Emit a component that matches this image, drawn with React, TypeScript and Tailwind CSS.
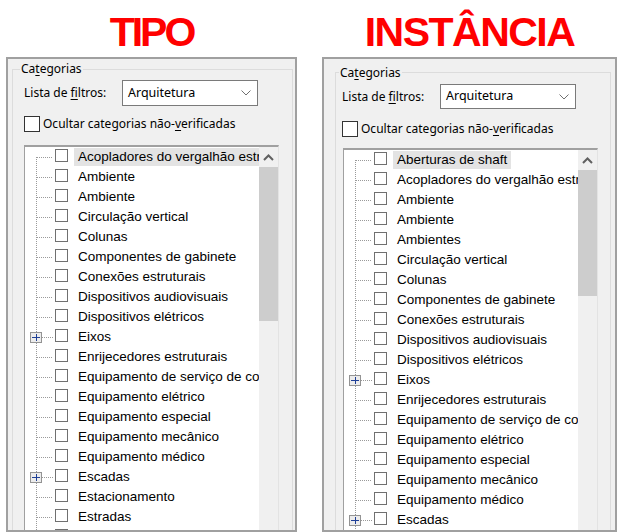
import React from 'react';

type Row = { t: string; sel?: boolean; plus?: boolean };

const UI = "font-['Noto_Sans','Liberation_Sans',sans-serif] text-[12px] text-black";

const leftRows: Row[] = [
  { t: 'Acopladores do vergalhão estrutural', sel: true },
  { t: 'Ambiente' },
  { t: 'Ambiente' },
  { t: 'Circulação vertical' },
  { t: 'Colunas' },
  { t: 'Componentes de gabinete' },
  { t: 'Conexões estruturais' },
  { t: 'Dispositivos audiovisuais' },
  { t: 'Dispositivos elétricos' },
  { t: 'Eixos', plus: true },
  { t: 'Enrijecedores estruturais' },
  { t: 'Equipamento de serviço de construção' },
  { t: 'Equipamento elétrico' },
  { t: 'Equipamento especial' },
  { t: 'Equipamento mecânico' },
  { t: 'Equipamento médico' },
  { t: 'Escadas', plus: true },
  { t: 'Estacionamento' },
  { t: 'Estradas' },
  { t: 'Estrutura' },
];

const rightRows: Row[] = [
  { t: 'Aberturas de shaft', sel: true },
  { t: 'Acopladores do vergalhão estrutural' },
  { t: 'Ambiente' },
  { t: 'Ambiente' },
  { t: 'Ambientes' },
  { t: 'Circulação vertical' },
  { t: 'Colunas' },
  { t: 'Componentes de gabinete' },
  { t: 'Conexões estruturais' },
  { t: 'Dispositivos audiovisuais' },
  { t: 'Dispositivos elétricos' },
  { t: 'Eixos', plus: true },
  { t: 'Enrijecedores estruturais' },
  { t: 'Equipamento de serviço de construção' },
  { t: 'Equipamento elétrico' },
  { t: 'Equipamento especial' },
  { t: 'Equipamento mecânico' },
  { t: 'Equipamento médico' },
  { t: 'Escadas', plus: true },
  { t: 'Estacionamento' },
];

function TreeGlyph({ first, plus }: { first: boolean; plus?: boolean }) {
  return (
    <svg width="30" height="20" className="shrink-0 block">
      <line x1="11.5" y1={first ? 10 : 0} x2="11.5" y2="20" stroke="#9a9a9a" strokeDasharray="1 1" />
      <line x1={plus ? 17 : 12} y1="10.5" x2="28" y2="10.5" stroke="#9a9a9a" strokeDasharray="1 1" />
      {plus && (
        <g>
          <rect x="5.5" y="5.5" width="11" height="10" fill="#ececec" stroke="#939393" />
          <line x1="7" y1="10.5" x2="15" y2="10.5" stroke="#1f3f96" />
          <line x1="11.5" y1="7" x2="11.5" y2="14" stroke="#1f3f96" />
        </g>
      )}
    </svg>
  );
}

function TreeRow({ row, first }: { row: Row; first: boolean }) {
  return (
    <div className="flex h-[20px] items-start">
      <TreeGlyph first={first} plus={row.plus} />
      <div className="mt-[2px] h-[13px] w-[13px] shrink-0 border border-[#707070] bg-white" />
      <span
        className={`ml-[6px] mt-[1px] h-[18px] whitespace-nowrap px-[4px] font-['Liberation_Sans',Arial,sans-serif] text-[13.5px] leading-[18px] text-black ${
          row.sel ? 'bg-[#e3e3e3]' : ''
        }`}
      >
        {row.t}
      </span>
    </div>
  );
}

function Chevron({ up }: { up?: boolean }) {
  if (up) {
    return (
      <svg width="11" height="7" className="block">
        <polyline points="1,6 5.5,1.5 10,6" fill="none" stroke="#606060" strokeWidth="2" />
      </svg>
    );
  }
  return (
    <svg width="10" height="6" className="block">
      <polyline points="0.5,0.5 5,5 9.5,0.5" fill="none" stroke="#707070" strokeWidth="1" />
    </svg>
  );
}

function ListBox({ rows, thumb, className }: { rows: Row[]; thumb: string; className: string }) {
  return (
    <div
      className={`flex h-[420px] w-[255px] border-l border-r border-t-2 border-l-[#a0a0a0] border-r-[#e3e3e3] border-t-[#a0a0a0] bg-white ${className}`}
    >
      <div className="flex-1 overflow-hidden">
        {rows.map((r, i) => (
          <TreeRow key={i} row={r} first={i === 0} />
        ))}
      </div>
      <div className="flex w-[19px] shrink-0 flex-col bg-[#f0f0f0]">
        <div className="flex h-[20px] items-center justify-center">
          <Chevron up />
        </div>
        <div className={`bg-[#cdcdcd] ${thumb}`} />
      </div>
    </div>
  );
}

function Dropdown({ h }: { h: string }) {
  return (
    <div className={`flex w-[136px] items-center justify-between border border-[#7a7a7a] bg-white pl-[5px] pr-[6px] ${h}`}>
      <span className="font-['Noto_Sans',sans-serif] text-[12.5px] text-black">Arquitetura</span>
      <Chevron />
    </div>
  );
}

function Categorias({ labelPos }: { labelPos: string }) {
  return (
    <span className={`absolute bg-[#f0f0f0] px-[1px] leading-[16px] ${UI} ${labelPos}`}>
      Ca<span className="underline underline-offset-2">t</span>egorias
    </span>
  );
}

function ListaRow({ h }: { h: string }) {
  return (
    <div className="flex items-center">
      <span className={`w-[98px] ${UI}`}>
        Lista de <span className="underline underline-offset-2">f</span>iltros:
      </span>
      <Dropdown h={h} />
    </div>
  );
}

function Ocultar({ mt }: { mt: string }) {
  return (
    <div className={`flex items-center ${mt}`}>
      <div className="h-[16px] w-[16px] border border-[#333333] bg-white" />
      <span className={`ml-[3px] leading-[16px] ${UI}`}>
        Ocultar categorias não-<span className="underline underline-offset-2">v</span>erificadas
      </span>
    </div>
  );
}

function Title({ children, track }: { children: React.ReactNode; track: string }) {
  return (
    <div
      className={`h-[57px] pt-[12px] text-center font-['Liberation_Sans',Arial,sans-serif] text-[41px] font-bold leading-[41px] text-[#ff0000] ${track}`}
    >
      {children}
    </div>
  );
}

export default function App() {
  return (
    <div className="flex h-[532px] w-[624px] overflow-hidden bg-white pl-[6px]">
      {/* TIPO */}
      <div className="flex w-[291px] flex-col">
        <Title track="tracking-[-3px]">TIPO</Title>
        <div className="h-[475px] overflow-hidden border-2 border-[#a0a0a0] bg-[#f0f0f0]">
          <div className="relative ml-[4px] mr-[2px] mt-[10px] h-[480px] border border-[#dcdcdc] pl-[11px] pt-[10px]">
            <Categorias labelPos="left-[7px] top-[-9px]" />
            <ListaRow h="h-[26px]" />
            <Ocultar mt="mt-[10px]" />
            <ListBox rows={leftRows} thumb="h-[154px]" className="mt-[13px]" />
          </div>
        </div>
      </div>

      {/* INSTÂNCIA */}
      <div className="ml-[25px] flex w-[295px] flex-col">
        <Title track="tracking-[-1.5px]">INSTÂNCIA</Title>
        <div className="h-[475px] overflow-hidden border-2 border-[#a0a0a0] bg-[#f0f0f0]">
          <div className="relative ml-[11px] mr-[4px] mt-[13px] h-[480px] border border-[#dcdcdc] pl-[6px] pt-[11px]">
            <Categorias labelPos="left-[3px] top-[-8px]" />
            <ListaRow h="h-[25px]" />
            <Ocultar mt="mt-[12px]" />
            <ListBox rows={rightRows} thumb="h-[126px]" className="ml-[1px] mt-[11px]" />
          </div>
        </div>
      </div>
    </div>
  );
}
